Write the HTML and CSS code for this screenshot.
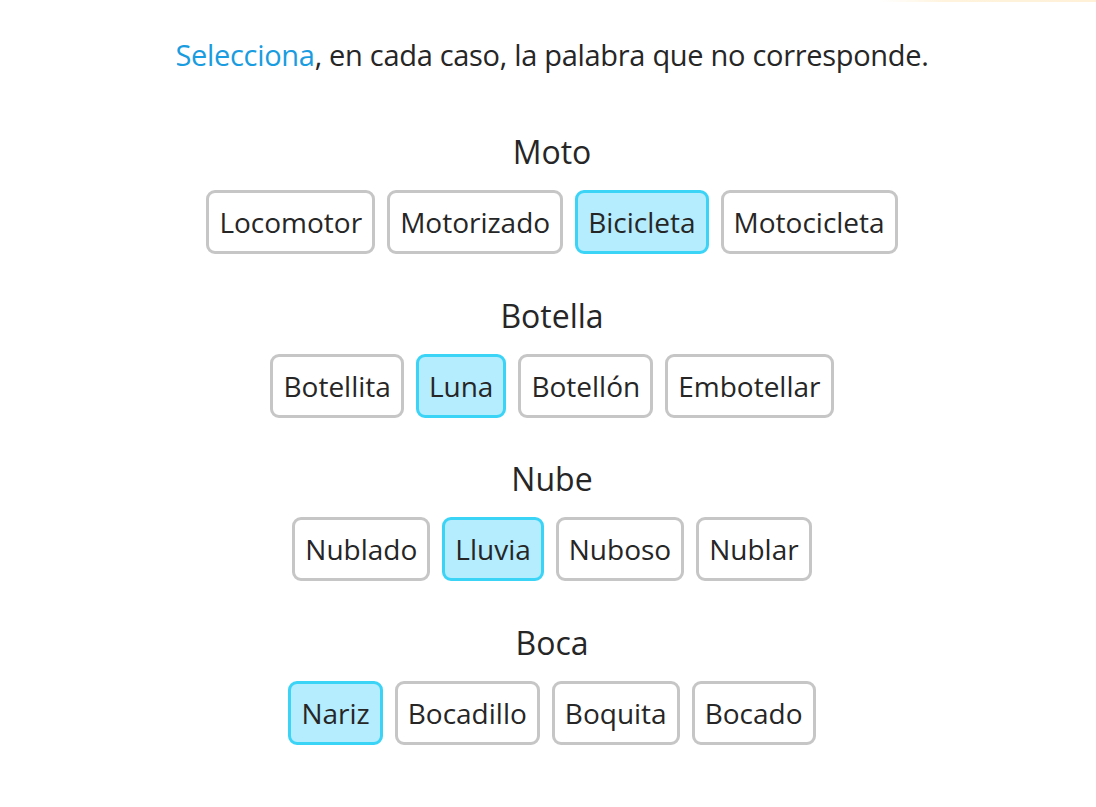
FILE: index.html
```html
<!DOCTYPE html>
<html lang="es">
<head>
<meta charset="utf-8">
<link rel="stylesheet" href="styles.css">
</head>
<body>
<div class="topline"></div>
<main class="page">
  <p class="instr"><span class="hl">Selecciona</span>, en cada caso, la palabra que no corresponde.</p>
  <div class="groups">
    <section class="group">
      <h2 class="word">Moto</h2>
      <div class="opts">
        <button class="opt">Locomotor</button>
        <button class="opt">Motorizado</button>
        <button class="opt sel">Bicicleta</button>
        <button class="opt">Motocicleta</button>
      </div>
    </section>
    <section class="group">
      <h2 class="word">Botella</h2>
      <div class="opts">
        <button class="opt">Botellita</button>
        <button class="opt sel">Luna</button>
        <button class="opt">Botellón</button>
        <button class="opt">Embotellar</button>
      </div>
    </section>
    <section class="group">
      <h2 class="word">Nube</h2>
      <div class="opts">
        <button class="opt">Nublado</button>
        <button class="opt sel">Lluvia</button>
        <button class="opt">Nuboso</button>
        <button class="opt">Nublar</button>
      </div>
    </section>
    <section class="group">
      <h2 class="word">Boca</h2>
      <div class="opts">
        <button class="opt sel">Nariz</button>
        <button class="opt">Bocadillo</button>
        <button class="opt">Boquita</button>
        <button class="opt">Bocado</button>
      </div>
    </section>
  </div>
</main>
</body>
</html>
```
FILE: styles.css
```css
html, body {
  margin: 0;
  padding: 0;
  background: #ffffff;
}
body {
  font-family: "Open Sans", "Noto Sans", sans-serif;
  color: #262626;
  position: relative;
  width: 1096px;
  height: 807px;
  overflow: hidden;
}
.topline {
  position: absolute;
  top: 0;
  right: 0;
  width: 216px;
  height: 2px;
  background: linear-gradient(to right, rgba(255,236,200,0), #fff3dd 30%, #fff1d8);
}
.page {
  display: flex;
  flex-direction: column;
  align-items: center;
  padding-top: 35px;
  padding-left: 8px;
}
.instr {
  margin: 0 0 57px 0;
  font-size: 29px;
  line-height: 40px;
  letter-spacing: -0.3px;
}
.hl {
  color: #1a9ce0;
}
.groups {
  display: flex;
  flex-direction: column;
  align-items: center;
  gap: 41.5px;
}
.group {
  display: flex;
  flex-direction: column;
  align-items: center;
}
.word {
  margin: 0 0 18px 0;
  font-weight: 400;
  font-size: 32px;
  line-height: 40px;
}
.opts {
  display: flex;
  gap: 12px;
}
.opt {
  box-sizing: border-box;
  font-family: inherit;
  font-size: 28px;
  line-height: 36px;
  color: #262626;
  background: #ffffff;
  border: 3px solid #c6c6c6;
  border-radius: 9px;
  padding: 11px 10px;
  height: 64px;
  cursor: pointer;
}
.opt.sel {
  background: #b5ecfe;
  border-color: #3bd4f7;
}
```
